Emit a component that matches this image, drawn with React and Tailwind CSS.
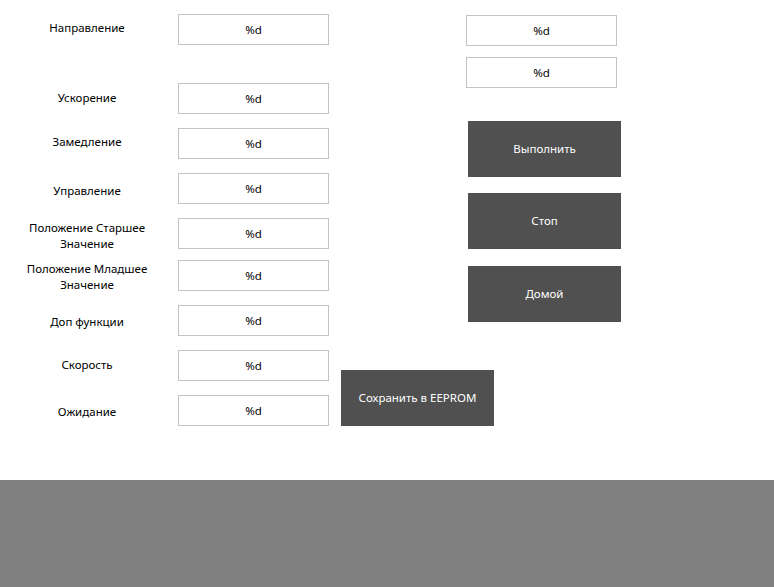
import React from 'react';

const rows = [
  { label: 'Направление', mt: 'mt-[14px]', shift: '-mt-[3px]' },
  { label: 'Ускорение', mt: 'mt-[38px]', shift: '-mt-[1px]' },
  { label: 'Замедление', mt: 'mt-[14px]', shift: '-mt-[3px]' },
  { label: 'Управление', mt: 'mt-[14px]', shift: 'mt-[5px]' },
  { label: ['Положение Старшее', 'Значение'], mt: 'mt-[14px]', shift: 'mt-[5px]' },
  { label: ['Положение Младшее', 'Значение'], mt: 'mt-[11px]', shift: 'mt-[3px]' },
  { label: 'Доп функции', mt: 'mt-[14px]', shift: 'mt-[3px]' },
  { label: 'Скорость', mt: 'mt-[14px]', shift: '-mt-[1px]' },
  { label: 'Ожидание', mt: 'mt-[14px]', shift: 'mt-[3px]' },
];

const Field = ({ className = '' }) => (
  <div className={`h-[31px] w-[151px] border border-[#c3c3c3] bg-white flex items-center justify-center text-[11.5px] text-black ${className}`}>
    %d
  </div>
);

const Btn = ({ children, className = '' }) => (
  <button className={`h-[56px] w-[153px] bg-[#505050] text-white text-[11.5px] flex items-center justify-center ${className}`}>
    {children}
  </button>
);

export default function App() {
  return (
    <div className="h-[587px] w-[774px] flex flex-col font-['Noto_Sans','Open_Sans',sans-serif]">
      <div className="h-[480px] bg-white flex">
        {/* left: labels + inputs */}
        <div className="flex flex-col w-[329px]">
          {rows.map((r, i) => (
            <div key={i} className={`flex items-center h-[31px] ${r.mt}`}>
              <div className={`w-[174px] text-center text-[11.5px] leading-[16px] text-black ${r.shift}`}>
                {Array.isArray(r.label) ? r.label.map((l) => <div key={l}>{l}</div>) : r.label}
              </div>
              <Field className="ml-[4px]" />
            </div>
          ))}
        </div>

        {/* right side */}
        <div className="flex flex-col ml-[12px]">
          <div className="flex flex-col ml-[125px]">
            <Field className="mt-[15px]" />
            <Field className="mt-[11px]" />
            <Btn className="mt-[33px] ml-[2px]">Выполнить</Btn>
            <Btn className="mt-[16px] ml-[2px]">Стоп</Btn>
            <Btn className="mt-[17px] ml-[2px]">Домой</Btn>
          </div>
          <Btn className="mt-[48px]">Сохранить в EEPROM</Btn>
        </div>
      </div>
      <div className="flex-1 bg-[#808080]" />
    </div>
  );
}
